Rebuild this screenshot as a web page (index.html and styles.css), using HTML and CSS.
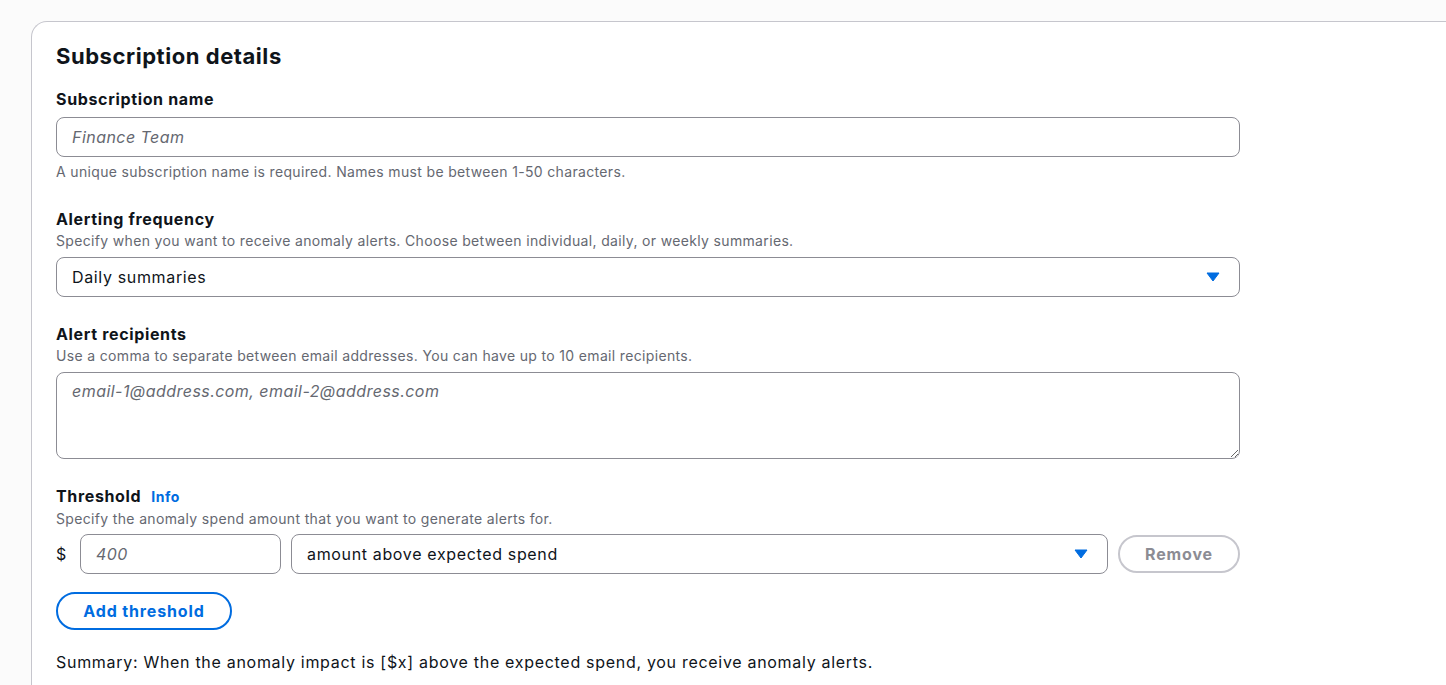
FILE: index.html
```html
<!DOCTYPE html>
<html lang="en">
<head>
<meta charset="utf-8">
<title>Subscription details</title>
<link rel="stylesheet" href="styles.css">
</head>
<body>
<div class="page">
  <section class="card">
    <h2 class="card-title">Subscription details</h2>
    <div class="form">
      <div class="field">
        <div class="label-group label-only">
          <label class="label" for="sub-name">Subscription name</label>
        </div>
        <input id="sub-name" class="input" type="text" placeholder="Finance Team">
        <div class="hint">A unique subscription name is required. Names must be between 1-50 characters.</div>
      </div>

      <div class="field">
        <div class="label-group">
          <div class="label">Alerting frequency</div>
          <div class="desc">Specify when you want to receive anomaly alerts. Choose between individual, daily, or weekly summaries.</div>
        </div>
        <div class="select">
          <span class="select-value">Daily summaries</span>
          <svg class="caret" width="14" height="10" viewBox="0 0 14 10"><path d="M1 1 H13 L7 9 Z" fill="#006ce0" stroke="#006ce0" stroke-width="1" stroke-linejoin="round"/></svg>
        </div>
      </div>

      <div class="field">
        <div class="label-group">
          <label class="label" for="recipients">Alert recipients</label>
          <div class="desc">Use a comma to separate between email addresses. You can have up to 10 email recipients.</div>
        </div>
        <textarea id="recipients" class="textarea" placeholder="email-1@address.com, email-2@address.com"></textarea>
      </div>

      <div class="field">
        <div class="label-group tight">
          <div class="label">Threshold <a class="info" href="#">Info</a></div>
          <div class="desc">Specify the anomaly spend amount that you want to generate alerts for.</div>
        </div>
        <div class="threshold-row">
          <span class="dollar">$</span>
          <input class="input amount" type="text" placeholder="400">
          <div class="select grow">
            <span class="select-value">amount above expected spend</span>
            <svg class="caret" width="14" height="10" viewBox="0 0 14 10"><path d="M1 1 H13 L7 9 Z" fill="#006ce0" stroke="#006ce0" stroke-width="1" stroke-linejoin="round"/></svg>
          </div>
          <button class="btn btn-disabled" type="button">Remove</button>
        </div>
        <div class="add-row">
          <button class="btn btn-normal" type="button">Add threshold</button>
        </div>
      </div>

      <p class="summary">Summary: When the anomaly impact is [$x] above the expected spend, you receive anomaly alerts.</p>
    </div>
  </section>
</div>
</body>
</html>
```

FILE: styles.css
```css
html, body {
  margin: 0;
  padding: 0;
  background: #fbfbfb;
  overflow: hidden;
}
body {
  font-family: Inter, "Open Sans", Arial, sans-serif;
  color: #0f141a;
  letter-spacing: 0.65px;
}
.page {
  padding: 21px 0 0 31px;
}
.card {
  width: 1500px;
  background: #ffffff;
  border: 1px solid #c6c6cd;
  border-right: none;
  border-radius: 16px 0 0 0;
  padding: 19px 24px 40px 24px;
  box-sizing: border-box;
  min-height: 700px;
}
.card-title {
  margin: 0;
  font-size: 22px;
  line-height: 30px;
  font-weight: 700;
  letter-spacing: 0.55px;
}
.form {
  width: 1184px;
  margin-top: 17px;
  display: flex;
  flex-direction: column;
  gap: 26px;
}
.field {
  display: flex;
  flex-direction: column;
}
.label-group {
  display: flex;
  flex-direction: column;
  margin-bottom: 6px;
}
.label-group.label-only {
  margin-bottom: 7px;
}
.label-group.tight {
  margin-bottom: 5px;
}
.label {
  font-size: 16px;
  line-height: 22px;
  font-weight: 700;
  display: flex;
  align-items: baseline;
  gap: 10px;
}
.info {
  color: #006ce0;
  font-size: 14px;
  font-weight: 700;
  letter-spacing: 0.5px;
  text-decoration: none;
}
.desc {
  font-size: 14px;
  line-height: 20px;
  margin-top: 1px;
  color: #656871;
  letter-spacing: 0.34px;
}
.hint {
  font-size: 14px;
  line-height: 20px;
  color: #656871;
  margin-top: 5px;
  letter-spacing: 0.34px;
}
.input, .textarea {
  font-family: inherit;
  font-size: 16px;
  letter-spacing: 0.45px;
  color: #0f141a;
  background: #ffffff;
  border: 1px solid #8c8c94;
  border-radius: 8px;
  box-sizing: border-box;
  padding: 0 15px;
  outline: none;
}
.input {
  height: 40px;
  width: 100%;
}
.input::placeholder, .textarea::placeholder {
  color: #656871;
  font-style: italic;
  opacity: 1;
}
.textarea {
  height: 87px;
  width: 100%;
  padding-top: 7px;
  line-height: 22px;
  resize: vertical;
  display: block;
}
.select {
  height: 40px;
  box-sizing: border-box;
  border: 1px solid #8c8c94;
  border-radius: 8px;
  background: #ffffff;
  display: flex;
  align-items: center;
  justify-content: space-between;
  padding: 0 19px 0 15px;
  font-size: 16px;
}
.caret {
  display: block;
  flex: none;
}
.threshold-row {
  display: flex;
  align-items: center;
  gap: 10px;
}
.dollar {
  font-size: 16px;
  width: 14px;
}
.amount {
  width: 201px;
  flex: none;
}
.grow {
  flex: 1;
}
.btn {
  font-family: inherit;
  font-size: 16px;
  font-weight: 700;
  letter-spacing: 0.85px;
  border-radius: 20px;
  height: 38px;
  padding: 0 16px;
  box-sizing: border-box;
  background: #ffffff;
  cursor: pointer;
}
.btn-disabled {
  width: 122px;
  flex: none;
  border: 2px solid #c6c6cd;
  color: #8c8c94;
}
.btn-normal {
  width: 176px;
  border: 2px solid #006ce0;
  color: #006ce0;
}
.add-row {
  margin-top: 18px;
}
.summary {
  margin: -5px 0 0 0;
  font-size: 16px;
  line-height: 22px;
  letter-spacing: 0.7px;
}
```
